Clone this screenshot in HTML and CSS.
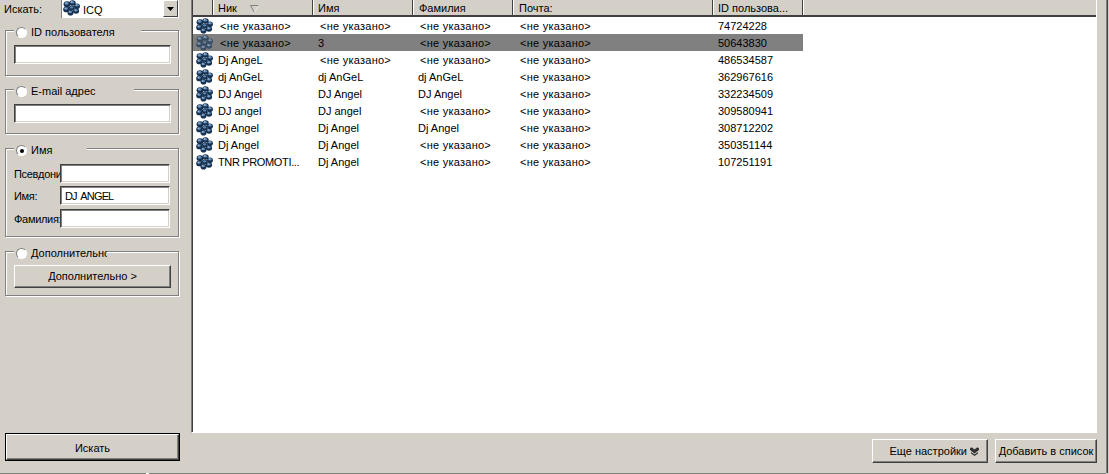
FILE: index.html
```html
<!DOCTYPE html>
<html lang="ru">
<head>
<meta charset="utf-8">
<title>Поиск ICQ</title>
<link rel="stylesheet" href="styles.css">
</head>
<body>
<svg class="defs" width="0" height="0" aria-hidden="true">
  <symbol id="flower" viewBox="0 0 17 16">
    <g fill="#16304f">
      <ellipse cx="4" cy="4.2" rx="3.4" ry="3"/>
      <ellipse cx="9.5" cy="3" rx="3.2" ry="2.8"/>
      <ellipse cx="14" cy="6.2" rx="2.9" ry="2.8"/>
      <ellipse cx="3.4" cy="9.4" rx="3.2" ry="2.9"/>
      <ellipse cx="8.8" cy="8" rx="2.9" ry="2.5"/>
      <ellipse cx="13" cy="11" rx="3.1" ry="2.8"/>
      <ellipse cx="7.5" cy="12.8" rx="3" ry="2.8"/>
    </g>
    <g fill="#5f88b5">
      <ellipse cx="3.6" cy="3.4" rx="2" ry="1.4"/>
      <ellipse cx="9.2" cy="2.2" rx="1.9" ry="1.3"/>
      <ellipse cx="14" cy="5.2" rx="1.7" ry="1.3"/>
      <ellipse cx="3" cy="8.6" rx="1.8" ry="1.3"/>
      <ellipse cx="8.6" cy="7.4" rx="1.6" ry="1.1"/>
      <ellipse cx="12.8" cy="10.2" rx="1.8" ry="1.3"/>
      <ellipse cx="7.2" cy="12" rx="1.8" ry="1.3"/>
    </g>
    <g fill="#cfdcea">
      <circle cx="3" cy="3" r=".6"/>
      <circle cx="8.7" cy="1.9" r=".6"/>
      <circle cx="13.6" cy="4.9" r=".5"/>
      <circle cx="2.600" cy="8.3" r=".5"/>
      <circle cx="12.4" cy="9.9" r=".5"/>
      <circle cx="6.800" cy="11.7" r=".5"/>
    </g>
  </symbol>
</svg>
<div class="app">
  <aside class="side">
    <div class="search-by">
      <span class="search-label">Искать:</span>
      <div class="combo">
        <svg class="icon"><use href="#flower"/></svg>
        <span class="combo-text">ICQ</span>
        <span class="combo-btn"><svg width="7" height="4" viewBox="0 0 7 4"><path d="M0 0h7L3.5 4z" fill="#000"/></svg></span>
      </div>
    </div>
    <section class="group g-id">
      <div class="legend l-id"><span class="radio"></span><span class="legend-text">ID пользователя</span></div>
      <div class="field"></div>
    </section>
    <section class="group g-mail">
      <div class="legend l-mail"><span class="radio"></span><span class="legend-text">E-mail адрес</span></div>
      <div class="field"></div>
    </section>
    <section class="group g-name">
      <div class="legend l-name"><span class="radio on"></span><span class="legend-text">Имя</span></div>
      <div class="row-field"><span class="row-label">Псевдоним:</span><div class="field"></div></div>
      <div class="row-field"><span class="row-label">Имя:</span><div class="field"><span class="caps">DJ ANGEL</span></div></div>
      <div class="row-field"><span class="row-label">Фамилия:</span><div class="field"></div></div>
    </section>
    <section class="group g-more">
      <div class="legend l-more"><span class="radio"></span><span class="legend-text">Дополнительно</span></div>
      <div class="btn btn-more">Дополнительно &gt;</div>
    </section>
    <div class="spacer"></div>
    <div class="btn-default"><div class="btn-default-in">Искать</div></div>
  </aside>
  <main class="content">
    <div class="list">
      <div class="row head">
        <div class="hc hc-icon"></div>
        <div class="hc">Ник<svg class="sort" width="9" height="8" viewBox="0 0 9 8"><path d="M.5.5h8L4.5 7.5z" fill="none" stroke="#808080"/><path d="M8.5.5 4.5 7.5" stroke="#fff" fill="none"/></svg></div>
        <div class="hc">Имя</div>
        <div class="hc">Фамилия</div>
        <div class="hc">Почта:</div>
        <div class="hc">ID пользова...</div>
        <div class="hc hc-rest"></div>
      </div>
      <div class="row"><svg class="icon cell-icon"><use href="#flower"/></svg><div class="c"><span class="na">&lt;не указано&gt;</span></div><div class="c"><span class="na">&lt;не указано&gt;</span></div><div class="c"><span class="na">&lt;не указано&gt;</span></div><div class="c"><span class="na">&lt;не указано&gt;</span></div><div class="c">74724228</div></div>
      <div class="row sel"><svg class="icon cell-icon"><use href="#flower"/></svg><div class="c"><span class="na">&lt;не указано&gt;</span></div><div class="c">3</div><div class="c"><span class="na">&lt;не указано&gt;</span></div><div class="c"><span class="na">&lt;не указано&gt;</span></div><div class="c">50643830</div></div>
      <div class="row"><svg class="icon cell-icon"><use href="#flower"/></svg><div class="c">Dj AngeL</div><div class="c"><span class="na">&lt;не указано&gt;</span></div><div class="c"><span class="na">&lt;не указано&gt;</span></div><div class="c"><span class="na">&lt;не указано&gt;</span></div><div class="c">486534587</div></div>
      <div class="row"><svg class="icon cell-icon"><use href="#flower"/></svg><div class="c">dj AnGeL</div><div class="c">dj AnGeL</div><div class="c">dj AnGeL</div><div class="c"><span class="na">&lt;не указано&gt;</span></div><div class="c">362967616</div></div>
      <div class="row"><svg class="icon cell-icon"><use href="#flower"/></svg><div class="c">DJ Angel</div><div class="c">DJ Angel</div><div class="c">DJ Angel</div><div class="c"><span class="na">&lt;не указано&gt;</span></div><div class="c">332234509</div></div>
      <div class="row"><svg class="icon cell-icon"><use href="#flower"/></svg><div class="c">DJ angel</div><div class="c">DJ angel</div><div class="c"><span class="na">&lt;не указано&gt;</span></div><div class="c"><span class="na">&lt;не указано&gt;</span></div><div class="c">309580941</div></div>
      <div class="row"><svg class="icon cell-icon"><use href="#flower"/></svg><div class="c">Dj Angel</div><div class="c">Dj Angel</div><div class="c">Dj Angel</div><div class="c"><span class="na">&lt;не указано&gt;</span></div><div class="c">308712202</div></div>
      <div class="row"><svg class="icon cell-icon"><use href="#flower"/></svg><div class="c">Dj Angel</div><div class="c">Dj Angel</div><div class="c"><span class="na">&lt;не указано&gt;</span></div><div class="c"><span class="na">&lt;не указано&gt;</span></div><div class="c">350351144</div></div>
      <div class="row"><svg class="icon cell-icon"><use href="#flower"/></svg><div class="c"><span class="caps-sm">TNR PROMOTI...</span></div><div class="c">Dj Angel</div><div class="c"><span class="na">&lt;не указано&gt;</span></div><div class="c"><span class="na">&lt;не указано&gt;</span></div><div class="c">107251191</div></div>
    </div>
    <div class="actions">
      <div class="btn btn-opts">Еще настройки<svg class="chev" width="9" height="9" viewBox="0 0 9 9"><path d="M0 1.500 1 .5l1 0 2.500 2L7 .5l1 0 1 1V3L4.500 6.500 0 3zM1 5l3.500 2.500L8 5v1.500L4.500 9 1 6.500z" fill="#303030"/></svg></div>
      <div class="btn btn-add">Добавить в список</div>
    </div>
  </main>
  <div class="edge"></div>
</div>
<div class="status"><span class="notch"></span></div>
</body>
</html>
```
FILE: styles.css
```css
* { box-sizing: border-box; }
html, body { margin: 0; padding: 0; }
body {
  width: 1109px;
  height: 474px;
  overflow: hidden;
  background: #d4d0c8;
  color: #000;
  font: 11px/13px "Liberation Sans", Arial, sans-serif;
  display: flex;
  flex-direction: column;
}
.defs { position: absolute; }
.app { flex: 1; display: flex; min-height: 0; }
.status { height: 1px; width: 1106px; background: #808080; padding-left: 146px; display: flex; }
.notch { width: 3px; height: 1px; background: #fff; }

.side {
  width: 191px;
  flex: none;
  padding-left: 5px;
  padding-right: 12px;
  display: flex;
  flex-direction: column;
}
.search-by { display: flex; height: 30px; }
.search-label { width: 57px; margin-left: -1px; padding-top: 3px; }
.combo {
  width: 118px;
  height: 19px;
  display: flex;
  align-items: center;
  background: #fff;
  border-bottom: 1px solid #d4d0c8;
  border-right: 1px solid #fff;
  box-shadow: inset 1px 0 0 #808080;
  padding-left: 2px;
}
.combo .icon { width: 17px; height: 16px; margin-top: -2px; }
.combo-text { margin-left: 3px; padding-top: 2px; flex: 1; }
.combo-btn {
  width: 15px;
  height: 17px;
  margin-top: -1px;
  display: flex;
  align-items: center;
  justify-content: center;
  background: #d4d0c8;
  border: 1px solid;
  border-color: #fff #404040 #404040 #fff;
}

.group {
  position: relative;
  width: 174px;
  border: 1px solid #808080;
  box-shadow: 1px 1px 0 #fff, inset 1px 1px 0 #fff;
  padding: 14px 8px 0;
}
.g-id { height: 46px; }
.g-mail { height: 45px; margin-top: 13px; }
.g-name { height: 89px; margin-top: 14px; padding-top: 15px; }
.g-more { height: 45px; margin-top: 14px; padding-top: 13px; }

.legend {
  position: absolute;
  left: 8px;
  top: -6px;
  height: 15px;
  display: flex;
  align-items: center;
  background: #d4d0c8;
  overflow: hidden;
  white-space: nowrap;
}
.l-id { width: 127px; }
.l-mail { width: 120px; }
.l-name { width: 73px; }
.l-more { width: 93px; }
.legend-text { margin-left: 4px; padding-bottom: 1px; }
.radio {
  width: 11px;
  height: 11px;
  margin-left: 2px;
  flex: none;
  border-radius: 50%;
  background: #fff;
  border: 1px solid;
  border-color: #808080 #fff #fff #808080;
  position: relative;
}
.radio.on::after {
  content: "";
  position: absolute;
  left: 2.500px;
  top: 2.500px;
  width: 4px;
  height: 4px;
  border-radius: 50%;
  background: #000;
}

.field {
  height: 19px;
  background: #fff;
  border: 1px solid;
  border-color: #404040 #fff #fff #404040;
  box-shadow: inset 1px 1px 0 #808080, inset -1px -1px 0 #d4d0c8;
  padding: 3px 0 0 4px;
}
.caps { letter-spacing: -.85px; word-spacing: 2px; }
.g-id .field, .g-mail .field { width: 157px; }
.row-field { display: flex; height: 19px; margin-bottom: 3px; }
.row-field:nth-of-type(3) { margin-bottom: 4px; }
.row-label { width: 46px; flex: none; overflow: hidden; white-space: nowrap; padding-top: 4px; letter-spacing: -.3px; }
.row-field .field { width: 110px; }

.btn {
  display: flex;
  align-items: center;
  justify-content: center;
  background: #d4d0c8;
  border: 1px solid;
  border-color: #fff #404040 #404040 #fff;
  box-shadow: inset -1px -1px 0 #808080;
  white-space: nowrap;
}
.btn-more { width: 157px; height: 23px; }
.spacer { flex: 1; }
.btn-default {
  width: 175px;
  height: 28px;
  margin-bottom: 12px;
  border: 1px solid #000;
}
.btn-default-in {
  height: 100%;
  padding-top: 2px;
  display: flex;
  align-items: center;
  justify-content: center;
  border: 1px solid;
  border-color: #fff #404040 #404040 #fff;
  box-shadow: inset -1px -1px 0 #808080;
}

.content { flex: 1; display: flex; flex-direction: column; min-width: 0; }
.list {
  height: 433px;
  background: #fff;
  border-left: 1px solid #808080;
  padding-left: 1px;
  border-right: 1px solid #fff;
  border-bottom: 1px solid #fff;
  box-shadow: inset 1px 0 0 #404040;
}
.row { display: flex; height: 17px; align-items: center; padding-left: 20px; position: relative; width: 610px; }
.head {
  width: auto;
  padding-left: 0;
  align-items: stretch;
  border-bottom: 2px solid #404040;
  background: #d4d0c8;
}
.hc {
  width: 100px;
  padding: 2px 0 0 4px;
  border-right: 1px solid #404040;
  border-left: 1px solid #fff;
  flex: none;
  white-space: nowrap;
  display: flex;
  align-items: center;
}
.hc-icon { width: 20px; padding: 0; border-left: 0; }
.hc:nth-child(4), .hc:nth-child(5) { padding-left: 5px; }
.hc:nth-child(5) { width: 200px; }
.hc:nth-child(6) { width: 90px; }
.hc-rest { flex: 1; border-right: 0; }
.sort { margin-left: 13px; }
.c { width: 100px; flex: none; padding: 2px 0 0 5px; white-space: nowrap; overflow: hidden; }
.c:nth-of-type(4) { width: 200px; }
.c:nth-of-type(5) { width: 90px; }
.na { margin-left: 2px; letter-spacing: .25px; }
.caps-sm { letter-spacing: -.35px; }
.cell-icon { position: absolute; left: 3px; top: 1px; width: 17px; height: 16px; }
.sel { background: #808080; }
.sel .cell-icon { opacity: .65; }

.actions { flex: 1; display: flex; justify-content: flex-end; padding: 6px 0 0; gap: 7px; }
.btn-opts { width: 116px; height: 24px; justify-content: flex-end; padding-right: 8px; }
.chev { margin-left: 3px; }
.btn-add { width: 102px; height: 24px; }
.edge { width: 12px; flex: none; box-shadow: inset -1px 0 0 #d4d0c8, inset -2px 0 0 #404040, inset -3px 0 0 #808080; }
```
